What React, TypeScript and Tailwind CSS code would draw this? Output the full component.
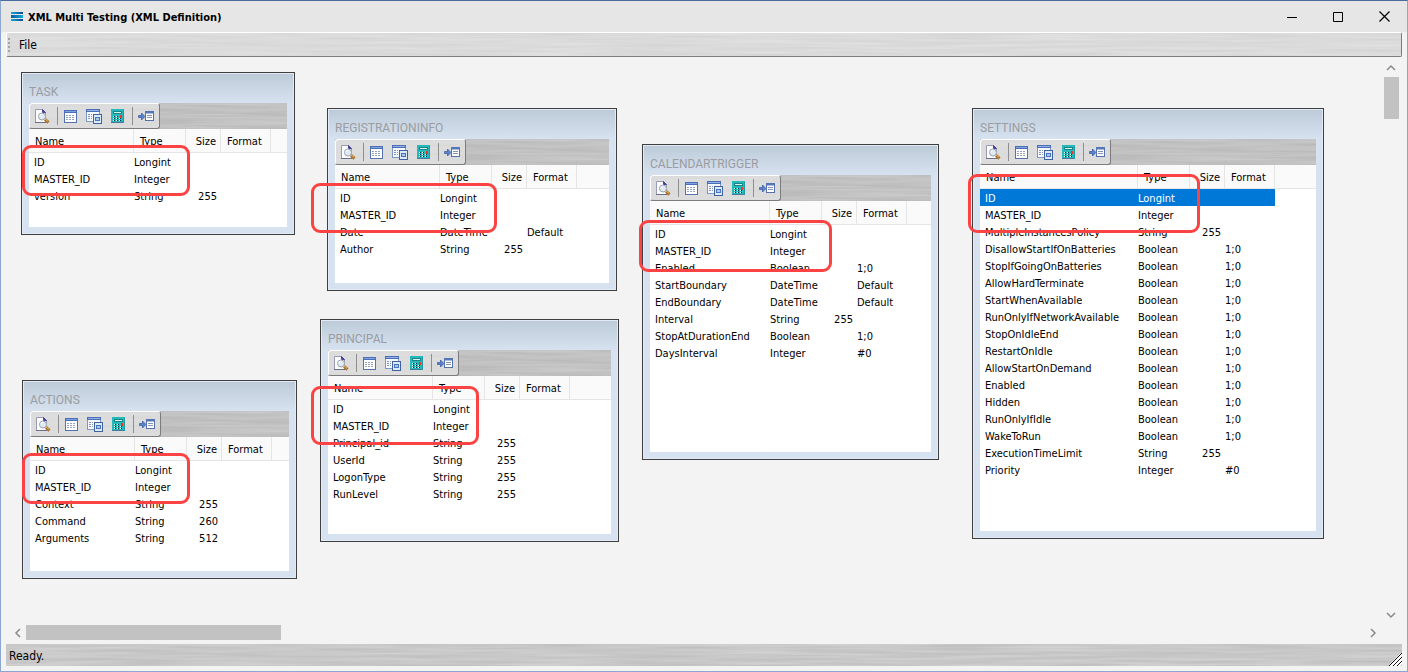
import React from "react";

type Row = [name: string, type: string, size: string, format: string];

interface Dataset {
  title: string;
  place: string;
  nameCol: string;
  rows: Row[];
  selected?: number;
  callout: string;
}

const datasets: Dataset[] = [
  {
    title: "TASK",
    place: "left-[20px] top-[15px] w-[274px] h-[163px]",
    nameCol: "w-[105px]",
    callout: "left-[21px] top-[88px] w-[168px] h-[51px]",
    rows: [
      ["ID", "Longint", "", ""],
      ["MASTER_ID", "Integer", "", ""],
      ["version", "String", "255", ""],
    ],
  },
  {
    title: "REGISTRATIONINFO",
    place: "left-[326px] top-[51px] w-[290px] h-[183px]",
    nameCol: "w-[105px]",
    callout: "left-[310px] top-[126px] w-[186px] h-[50px]",
    rows: [
      ["ID", "Longint", "", ""],
      ["MASTER_ID", "Integer", "", ""],
      ["Date", "DateTime", "", "Default"],
      ["Author", "String", "255", ""],
    ],
  },
  {
    title: "CALENDARTRIGGER",
    place: "left-[641px] top-[87px] w-[297px] h-[316px]",
    nameCol: "w-[120px]",
    callout: "left-[638px] top-[163px] w-[193px] h-[52px]",
    rows: [
      ["ID", "Longint", "", ""],
      ["MASTER_ID", "Integer", "", ""],
      ["Enabled", "Boolean", "", "1;0"],
      ["StartBoundary", "DateTime", "", "Default"],
      ["EndBoundary", "DateTime", "", "Default"],
      ["Interval", "String", "255", ""],
      ["StopAtDurationEnd", "Boolean", "", "1;0"],
      ["DaysInterval", "Integer", "", "#0"],
    ],
  },
  {
    title: "SETTINGS",
    place: "left-[971px] top-[51px] w-[352px] h-[431px]",
    nameCol: "w-[158px]",
    callout: "left-[967px] top-[117px] w-[232px] h-[59px]",
    selected: 0,
    rows: [
      ["ID", "Longint", "", ""],
      ["MASTER_ID", "Integer", "", ""],
      ["MultipleInstancesPolicy", "String", "255", ""],
      ["DisallowStartIfOnBatteries", "Boolean", "", "1;0"],
      ["StopIfGoingOnBatteries", "Boolean", "", "1;0"],
      ["AllowHardTerminate", "Boolean", "", "1;0"],
      ["StartWhenAvailable", "Boolean", "", "1;0"],
      ["RunOnlyIfNetworkAvailable", "Boolean", "", "1;0"],
      ["StopOnIdleEnd", "Boolean", "", "1;0"],
      ["RestartOnIdle", "Boolean", "", "1;0"],
      ["AllowStartOnDemand", "Boolean", "", "1;0"],
      ["Enabled", "Boolean", "", "1;0"],
      ["Hidden", "Boolean", "", "1;0"],
      ["RunOnlyIfIdle", "Boolean", "", "1;0"],
      ["WakeToRun", "Boolean", "", "1;0"],
      ["ExecutionTimeLimit", "String", "255", ""],
      ["Priority", "Integer", "", "#0"],
    ],
  },
  {
    title: "PRINCIPAL",
    place: "left-[319px] top-[262px] w-[299px] h-[223px]",
    nameCol: "w-[105px]",
    callout: "left-[310px] top-[329px] w-[168px] h-[59px]",
    rows: [
      ["ID", "Longint", "", ""],
      ["MASTER_ID", "Integer", "", ""],
      ["Principal_id", "String", "255", ""],
      ["UserId", "String", "255", ""],
      ["LogonType", "String", "255", ""],
      ["RunLevel", "String", "255", ""],
    ],
  },
  {
    title: "ACTIONS",
    place: "left-[21px] top-[323px] w-[275px] h-[199px]",
    nameCol: "w-[105px]",
    callout: "left-[21px] top-[396px] w-[168px] h-[51px]",
    rows: [
      ["ID", "Longint", "", ""],
      ["MASTER_ID", "Integer", "", ""],
      ["Context", "String", "255", ""],
      ["Command", "String", "260", ""],
      ["Arguments", "String", "512", ""],
    ],
  },
];

/* Brushed metal grain laid under a bar's content. */
function Brushed({ id }: { id: string }) {
  return (
    <svg className="pointer-events-none absolute inset-0 -z-10 h-full w-full" aria-hidden="true">
      <filter id={id} x="0" y="0" width="100%" height="100%">
        <feTurbulence type="fractalNoise" baseFrequency="0.01 0.35" numOctaves={2} seed={7} />
        <feColorMatrix values="0 0 0 0 1  0 0 0 0 1  0 0 0 0 1  0.45 0 0 0 0" />
      </filter>
      <rect width="100%" height="100%" filter={`url(#${id})`} />
    </svg>
  );
}

function PreviewIcon() {
  return (
    <svg width="17" height="16" viewBox="0 0 17 16" aria-hidden="true">
      <path d="M1.5 1.5h7l3 3v10h-10z" fill="#fbfcff" stroke="#9a9ab8" />
      <path d="M8.5 1.5v3h3z" fill="#45459c" stroke="#45459c" />
      <path d="M1 14.5h11" stroke="#6d6d88" />
      <circle cx="8" cy="8.5" r="3.5" fill="#dfeaf2" stroke="#9aa3ab" />
      <path d="M6 8a2 2 0 0 1 2-2" stroke="#fff" fill="none" />
      <path d="M11 11.5l3.5 3" stroke="#a9712a" strokeWidth="3" />
      <path d="M11 10.8l3 2.6" stroke="#e6b860" />
    </svg>
  );
}

function TableIcon() {
  return (
    <svg width="13" height="13" viewBox="0 0 13 13" shapeRendering="crispEdges" aria-hidden="true">
      <rect x="0.5" y="0.5" width="12" height="12" fill="#fff" stroke="#5672ae" />
      <path d="M0 1.5h13" stroke="#4a6fb8" strokeWidth="3" />
      <path d="M1 1.5h11" stroke="#7fa3dc" />
      <path d="M2 5.5h9M2 7.5h9M2 9.5h9" stroke="#93a3bf" strokeDasharray="2 1" />
    </svg>
  );
}

function CopyTableIcon() {
  return (
    <svg width="16" height="15" viewBox="0 0 16 15" shapeRendering="crispEdges" aria-hidden="true">
      <rect x="0.5" y="0.5" width="13" height="12" fill="#f5f8fd" stroke="#7b97c6" />
      <path d="M0 1.5h14" stroke="#4a6fb8" strokeWidth="3" />
      <path d="M1 1.5h12" stroke="#8fb1e4" />
      <path d="M2 5.5h4M2 7.5h4M2 9.5h4" stroke="#8496b8" strokeDasharray="2 1" />
      <rect x="7.5" y="5.5" width="8" height="9" fill="#dcebfa" stroke="#40629f" />
      <rect x="9.5" y="8.5" width="4" height="3" fill="#a9c8ee" stroke="#4a74bd" />
    </svg>
  );
}

function CalculatorIcon() {
  return (
    <svg width="13" height="14" viewBox="0 0 13 14" shapeRendering="crispEdges" aria-hidden="true">
      <rect x="0" y="0" width="13" height="14" fill="#25b9ba" />
      <path d="M0 13.5h13" stroke="#47779a" />
      <path d="M12.5 1v13" stroke="#1c9aa2" />
      <rect x="2.5" y="2.5" width="8" height="2" fill="#d5f5ef" stroke="#16868c" />
      <path d="M2 7.5h1M5 7.5h1M2 9.5h1M5 9.5h1M8 9.5h1M2 11.5h1M5 11.5h1M8 11.5h1" stroke="#fff" />
      <path d="M3 7.5h1M6 7.5h1M3 9.5h1M6 9.5h1M9 9.5h1M3 11.5h1M6 11.5h1M9 11.5h1" stroke="#102c50" />
      <rect x="9" y="6" width="2" height="3" fill="#f0342c" />
    </svg>
  );
}

function InsertIcon() {
  return (
    <svg width="16" height="11" viewBox="0 0 16 11" aria-hidden="true">
      <path d="M0.5 4.5h3V2L7 5.5 3.5 9V6.5h-3z" fill="#5b84cf" stroke="#35559b" strokeWidth="0.7" />
      <rect x="7.5" y="0.5" width="8" height="9" fill="#fff" stroke="#5672ae" />
      <path d="M7 1.5h9" stroke="#5477b8" strokeWidth="2" />
      <path d="M9 4.5h5M9 6.5h5" stroke="#8294b4" />
    </svg>
  );
}

function Separator() {
  return <span className="h-[18px] w-px bg-[#8f8f8f]" />;
}

function NodeToolbar({ id }: { id: string }) {
  return (
    <div className="relative isolate flex h-[26px] bg-[#b0b0b0]">
      <Brushed id={id} />
      <div className="flex w-[131px] items-center rounded-[3px] border border-t-white border-r-[#7c7c7c] border-b-[#7c7c7c] border-l-white bg-[#e4e4e4]/75 pl-1">
        <button aria-label="Preview" className="mr-[6px]"><PreviewIcon /></button>
        <Separator />
        <button aria-label="Fields" className="ml-[6px]"><TableIcon /></button>
        <button aria-label="Copy fields" className="ml-[9px]"><CopyTableIcon /></button>
        <button aria-label="Calculate" className="ml-[9px]"><CalculatorIcon /></button>
        <span className="w-2" />
        <Separator />
        <button aria-label="Insert field" className="ml-[5px]"><InsertIcon /></button>
      </div>
    </div>
  );
}

function DatasetNode({ data }: { data: Dataset }) {
  return (
    <section
      className={`absolute flex flex-col border border-[#3f3f3f] bg-[#d7e2f0] bg-linear-to-b from-[#bccad8] to-[#d7e2f0] to-[30px] px-[7px] pb-[7px] shadow-[inset_0_0_0_1px_#e2ebf5] ${data.place}`}
    >
      <h2 className="flex h-[30px] shrink-0 items-end pb-[3px] font-[Roboto,sans-serif] text-[12px] leading-4 text-[#9a9da1]">
        {data.title}
      </h2>
      <NodeToolbar id={`grain-${data.title}`} />
      <div className="min-h-0 flex-1 overflow-hidden bg-white bg-linear-to-b from-[#fafafa] from-[23px] to-white to-[23px]">
        <table className="w-full table-fixed border-separate border-spacing-0 text-left leading-[15px]">
          <colgroup>
            <col className={data.nameCol} />
            <col className="w-[52px]" />
            <col className="w-[35px]" />
            <col className="w-[50px]" />
            <col />
          </colgroup>
          <thead>
            <tr className="h-6 [&>th]:border-b [&>th]:border-[#e5e5e5] [&>th]:p-0 [&>th]:pt-[2px] [&>th]:font-normal">
              <th className="border-r"><span className="pl-[6px]">Name</span></th>
              <th className="border-r"><span className="pl-[6px]">Type</span></th>
              <th className="border-r text-right"><span className="pr-1">Size</span></th>
              <th className="border-r"><span className="pl-[6px]">Format</span></th>
              <td className="border-b border-[#e5e5e5]" />
            </tr>
          </thead>
          <tbody>
            {data.rows.map(([name, type, size, format], i) => (
              <tr
                key={name}
                className={i === data.selected ? "h-[17px] text-white [&>td]:bg-[#0078d7]" : "h-[17px]"}
              >
                <td className="p-0 pt-[2px] pl-[5px] whitespace-nowrap">{name}</td>
                <td className="p-0 pt-[2px] whitespace-nowrap">{type}</td>
                <td className="p-0 pt-[2px] pr-1 text-right">{size}</td>
                <td className="p-0 pt-[2px]">{format}</td>
              </tr>
            ))}
          </tbody>
        </table>
      </div>
    </section>
  );
}

function Chevron({ d, label }: { d: string; label: string }) {
  return (
    <button aria-label={label} className="flex size-4 shrink-0 items-center justify-center">
      <svg width="10" height="10" viewBox="0 0 10 10" fill="none" stroke="#8a8a8a" strokeWidth="1.5" aria-hidden="true">
        <path d={d} />
      </svg>
    </button>
  );
}

export default function App() {
  return (
    <div className="flex h-screen flex-col border border-t-[#4a6a9c] border-r-[#8ba6d0] border-b-[#8ba6d0] border-l-[#8ba6d0] bg-[#f3f3f3] font-['DejaVu_Sans_Condensed','DejaVu_Sans',sans-serif] text-[11px] leading-[17px] text-black">
      <header className="flex h-[31px] shrink-0 items-center bg-[#e6e6e6] pl-[10px]">
        <svg width="12" height="9" viewBox="0 0 12 9" shapeRendering="crispEdges" aria-hidden="true">
          <defs>
            <linearGradient id="logo" x1="0" x2="1">
              <stop offset="0" stopColor="#0a5c9c" />
              <stop offset="1" stopColor="#10a9dc" />
            </linearGradient>
            <linearGradient id="logo-back" x1="0" x2="1">
              <stop offset="0" stopColor="#10a9dc" />
              <stop offset="1" stopColor="#0a4b8c" />
            </linearGradient>
          </defs>
          <path d="M0 0h12v2H0z" fill="url(#logo-back)" />
          <path d="M0 3h12v3H0z" fill="url(#logo)" />
          <path d="M0 7h12v2H0z" fill="url(#logo-back)" />
        </svg>
        <h1 className="ml-[5px] grow pt-px font-bold">XML Multi Testing (XML Definition)</h1>
        <div className="flex h-full">
          <button aria-label="Minimize" className="flex w-[46px] items-center justify-center">
            <svg width="10" height="10" stroke="#000" aria-hidden="true"><path d="M0 5.5h10" /></svg>
          </button>
          <button aria-label="Maximize" className="flex w-[46px] items-center justify-center">
            <svg width="10" height="10" stroke="#000" fill="none" aria-hidden="true"><path d="M.5.5h9v9h-9z" /></svg>
          </button>
          <button aria-label="Close" className="flex w-[46px] items-center justify-center">
            <svg width="11" height="11" stroke="#000" strokeWidth="1.2" aria-hidden="true"><path d="M.5.5l10 10M10.5.5l-10 10" /></svg>
          </button>
        </div>
      </header>

      <nav className="relative isolate mx-[5px] flex h-[25px] shrink-0 items-center rounded-[2px] border border-t-white border-r-[#7c7c7c] border-b-[#7c7c7c] border-l-white bg-[#d0d0d0]">
        <Brushed id="grain-menu" />
        <span className="ml-px h-[14px] border-l-2 border-dotted border-[#a4a4a4]" />
        <button className="ml-[9px] pt-px text-[12px]">File</button>
      </nav>

      <main className="relative flex min-h-0 flex-1 flex-col overflow-hidden">
        {datasets.map((d) => (
          <DatasetNode key={d.title} data={d} />
        ))}
        {datasets.map((d) => (
          <div key={d.title} className={`pointer-events-none absolute rounded-[9px] border-3 border-[#fc4343] ${d.callout}`} />
        ))}
        <div className="flex min-h-0 flex-1 justify-end pt-[3px] pr-2 pb-[2px]">
          <div className="flex w-4 flex-col items-center">
            <Chevron label="Scroll up" d="M1 7l4-4 4 4" />
            <div className="mt-px h-[42px] w-[15px] shrink-0 bg-[#c2c2c2]" />
            <div className="grow" />
            <Chevron label="Scroll down" d="M1 3l4 4 4-4" />
          </div>
        </div>
        <div className="mb-1 flex h-[15px] shrink-0 items-center pr-[26px] pl-[9px]">
          <Chevron label="Scroll left" d="M7 1L3 5l4 4" />
          <div className="h-[15px] w-[255px] bg-[#c2c2c2]" />
          <div className="grow" />
          <Chevron label="Scroll right" d="M3 1l4 4-4 4" />
        </div>
      </main>

      <footer className="relative isolate mx-[5px] mb-[5px] flex h-[22px] shrink-0 items-center justify-between bg-[#b8b8b8] pl-[3px]">
        <Brushed id="grain-status" />
        <span className="pt-[2px] text-[12px]">Ready.</span>
        <svg width="13" height="13" viewBox="0 0 13 13" className="self-end" aria-hidden="true">
          <path d="M1 13L13 1M5 13l8-8M9 13l4-4" stroke="#fff" strokeWidth="3" />
          <path d="M0 13L13 0M4 13l9-9M8 13l5-5" stroke="#111" />
        </svg>
      </footer>
    </div>
  );
}
